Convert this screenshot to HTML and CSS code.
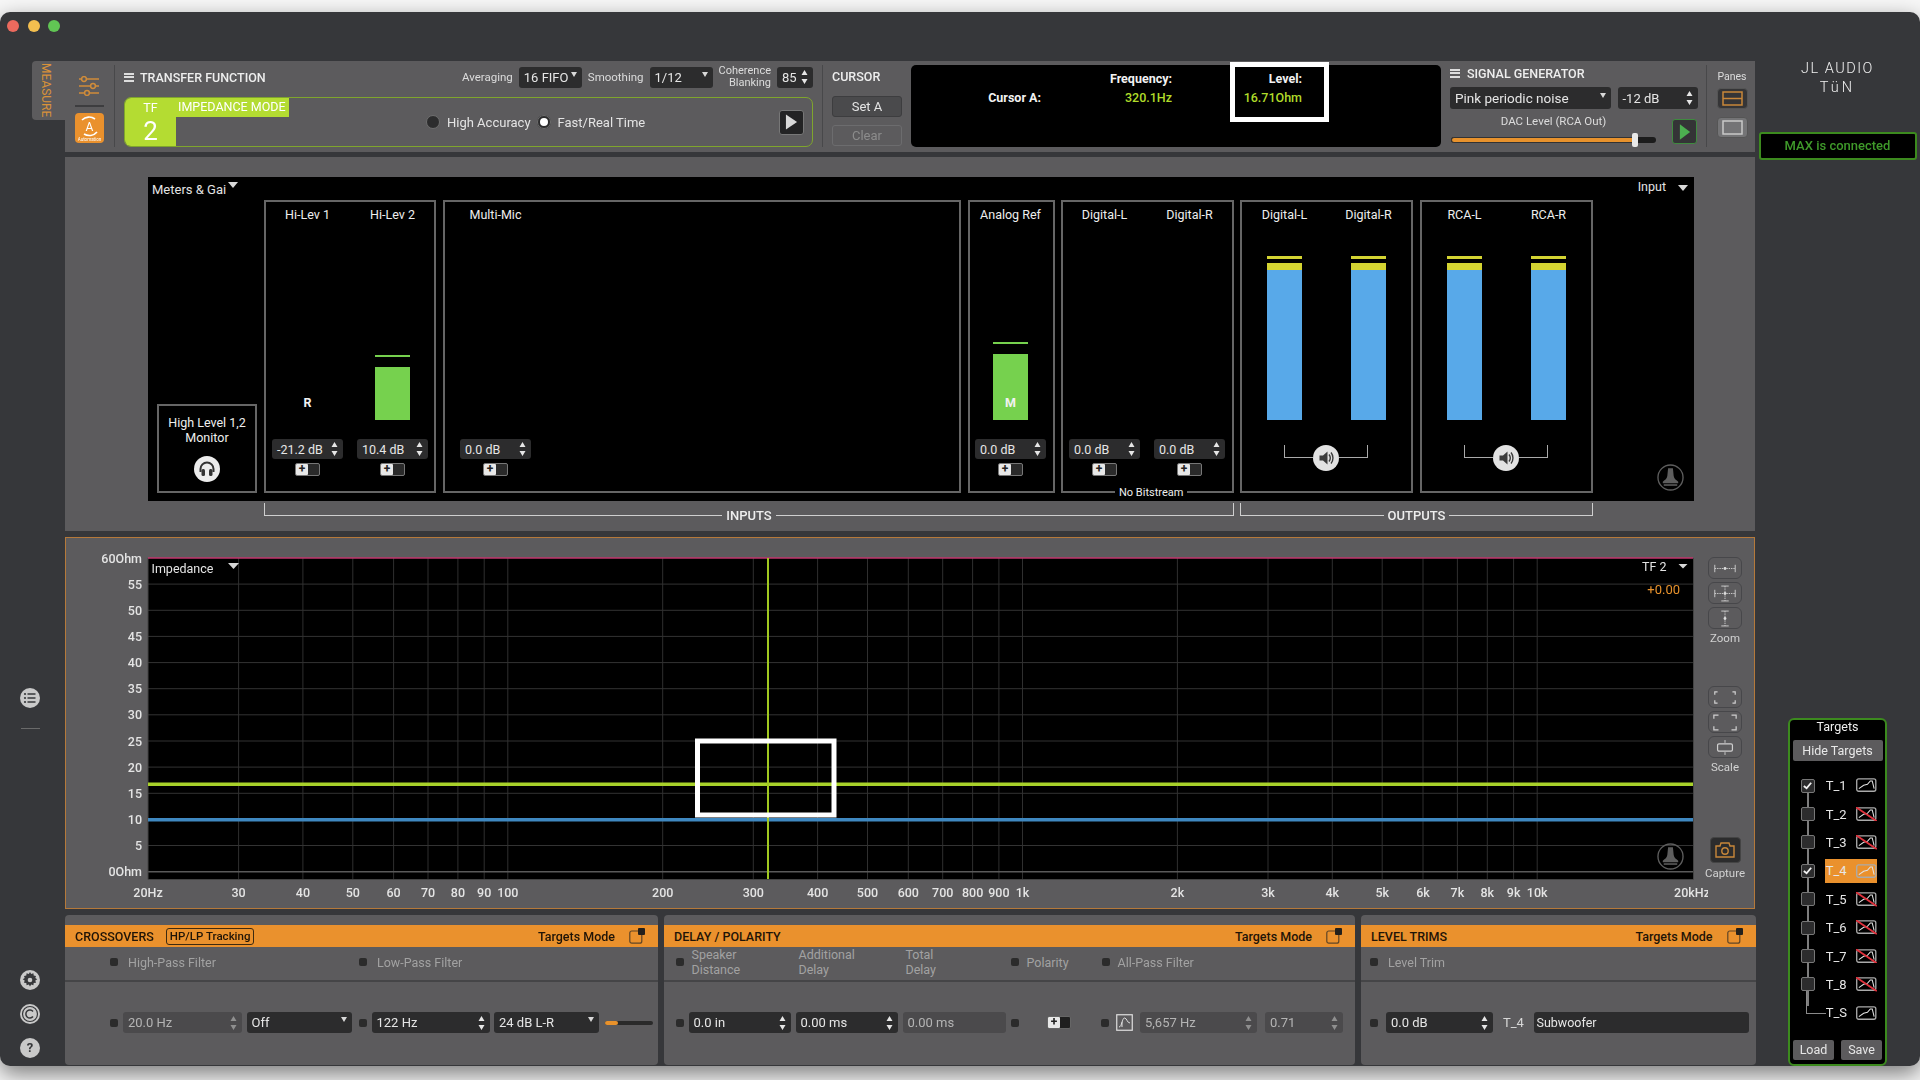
FILE: index.html
```html
<!DOCTYPE html>
<html lang="en">
<head>
<meta charset="utf-8">
<title>JL Audio TüN</title>
<link rel="stylesheet" href="styles.css">
</head>
<body>
<svg class="defs" aria-hidden="true">
  <symbol id="ud" viewBox="0 0 7 16"><path d="M3.5 1 6.5 6H.5Z M3.5 15 .5 10H6.5Z" fill="currentColor"/></symbol>
  <symbol id="tgt" viewBox="0 0 22 15"><rect x=".75" y=".75" width="20" height="13" rx="2" fill="none" stroke="#aaa" stroke-width="1.400"/><path d="M3 11 8 7.500 12 6.500 15 3 17 3 19 11" fill="none" stroke="#e2e2e2" stroke-width="1.100"/></symbol>
  <symbol id="tgtx" viewBox="0 0 22 15"><rect x=".75" y=".75" width="20" height="13" rx="2" fill="none" stroke="#aaa" stroke-width="1.400"/><path d="M3 11 8 7.500 12 6.500 15 3 17 3 19 11" fill="none" stroke="#e2e2e2" stroke-width="1.100"/><path d="M0 0 22 15" stroke="#e0313c" stroke-width="1.800"/></symbol>
  <symbol id="pop" viewBox="0 0 16 16"><rect x=".8" y="3" width="12" height="12.200" rx="2" fill="none" stroke="#5f4526" stroke-width="1.200"/><rect x="9" y="0" width="7" height="7" rx="1" fill="#23201c"/></symbol>
  <symbol id="tower" viewBox="0 0 28 28"><circle cx="14" cy="14" r="13" fill="none" stroke="#5e5e5e" stroke-width="1.400"/><path d="M11.500 4.500h5l.8 8c.4 3 3 4.500 4.700 5.800v1.700H6v-1.700c1.700-1.300 4.300-2.800 4.700-5.800Z" fill="#5e5e5e"/><path d="M7 21h14v1.600H7Z" fill="#5e5e5e"/></symbol>
  <symbol id="spk" viewBox="0 0 26 26"><circle cx="13" cy="13" r="13" fill="#e2e2e2"/><path d="M6.500 10.500h3.500l4.500-4v13l-4.500-4H6.500Z" fill="#3b3b3b"/><path d="M16 9.500c1.500 2 1.500 5 0 7M18 7.500c2.600 3.200 2.600 7.800 0 11" fill="none" stroke="#3b3b3b" stroke-width="1.400"/></symbol>
  <symbol id="led" viewBox="0 0 8 8"><rect width="8" height="8" rx="2" fill="#2b2b2b"/></symbol>
  <symbol id="check" viewBox="0 0 12 12"><path d="M2 6.500 5 9 10 3" fill="none" stroke="#f2f2f2" stroke-width="2"/></symbol>
</svg>

<div class="window">
  <aside class="rail">
    <div class="lights"><span class="light red"></span><span class="light amber"></span><span class="light green"></span></div>
    <div class="tab"><span>MEASURE</span></div>
    <svg class="rail-icon list-icon" viewBox="0 0 20 20"><circle cx="10" cy="10" r="10" fill="#c9c9c9"/><circle cx="5" cy="6" r="1.100" fill="#36373a"/><circle cx="5" cy="10" r="1.100" fill="#36373a"/><circle cx="5" cy="14" r="1.100" fill="#36373a"/><path d="M7.500 6h8M7.500 10h8M7.500 14h8" stroke="#36373a" stroke-width="1.600"/></svg>
    <div class="rail-rule"></div>
    <svg class="rail-icon gear-icon" viewBox="0 0 20 20"><circle cx="10" cy="10" r="10" fill="#c9c9c9"/><path d="M10 3.500l1.200 2 2.200-.7.300 2.300 2.300.3-.7 2.200 2 1.200-2 1.200.7 2.200-2.300.3-.3 2.300-2.200-.7-1.200 2-1.200-2-2.200.7-.3-2.300-2.300-.3.7-2.200-2-1.200 2-1.200-.7-2.200 2.300-.3.3-2.300 2.200.7Z" transform="translate(0 -1.500)" fill="#36373a"/><circle cx="10" cy="10" r="2.300" fill="#c9c9c9"/></svg>
    <svg class="rail-icon copy-icon" viewBox="0 0 20 20"><circle cx="10" cy="10" r="10" fill="#c9c9c9"/><circle cx="10" cy="10" r="7.500" fill="none" stroke="#36373a" stroke-width="1.200"/><path d="M13 7.500a4 4 0 1 0 0 5" fill="none" stroke="#36373a" stroke-width="1.500"/></svg>
    <div class="rail-icon help-icon">?</div>
  </aside>

  <main class="main">
    <section class="top">
      <div class="tc-a">
        <svg class="mixer" viewBox="0 0 22 20"><path d="M1 3h20M1 10h20M1 17h20" stroke="#d08c3a" stroke-width="1.600"/><circle cx="6" cy="3" r="2.400" fill="#5c5b5d" stroke="#d08c3a" stroke-width="1.500"/><circle cx="15" cy="10" r="2.400" fill="#5c5b5d" stroke="#d08c3a" stroke-width="1.500"/><circle cx="9" cy="17" r="2.400" fill="#5c5b5d" stroke="#d08c3a" stroke-width="1.500"/></svg>
        <div class="a-rule"></div>
        <svg class="auto" viewBox="0 0 29 30"><rect width="29" height="30" rx="4" fill="#ea912d"/><path d="M7 7a10 10 0 0 1 13-1M22 19a10 10 0 0 1-13 2" fill="none" stroke="#fff" stroke-width="1.600"/><text x="14.500" y="18" class="auto-a">A</text><text x="14.500" y="28" class="auto-t">Automation</text></svg>
      </div>
      <div class="tc-b">
        <div class="tf-head">
          <span class="burger"></span>
          <span class="sect">TRANSFER FUNCTION</span>
          <span class="lab push">Averaging</span>
          <span class="ctl w63"><span>16 FIFO</span><i class="tri"></i></span>
          <span class="lab">Smoothing</span>
          <span class="ctl w63"><span>1/12</span><i class="tri"></i></span>
          <span class="lab coh">Coherence<br>Blanking</span>
          <span class="ctl w36"><span>85</span><svg class="ud"><use href="#ud"/></svg></span>
        </div>
        <div class="tf-box">
          <div class="tf-id"><span class="tf-t">TF</span><span class="tf-n">2</span></div>
          <div class="tf-tag">IMPEDANCE MODE</div>
          <div class="radios">
            <span class="radio"></span><span class="rlab">High Accuracy</span>
            <span class="radio on"></span><span class="rlab">Fast/Real Time</span>
          </div>
          <button class="run"><svg viewBox="0 0 14 18"><path d="M1 1 13 9 1 17Z" fill="#d8d8d8"/></svg></button>
        </div>
      </div>
      <div class="tc-c">
        <div class="sect cur-t">CURSOR</div>
        <div class="btn">Set A</div>
        <div class="btn off">Clear</div>
      </div>
      <div class="readout">
        <span></span><b class="rh">Frequency:</b><b class="rh">Level:</b>
        <b class="rh">Cursor A:</b><b class="rv">320.1Hz</b><b class="rv">16.71Ohm</b>
        <div class="mark"></div>
      </div>
      <div class="siggen">
        <div class="sg-head"><span class="burger"></span><span class="sect">SIGNAL GENERATOR</span></div>
        <div class="sg-row">
          <span class="ctl w161 noise"><span>Pink periodic noise</span><i class="tri"></i></span>
          <span class="ctl w80"><span>-12 dB</span><svg class="ud"><use href="#ud"/></svg></span>
        </div>
        <div class="sg-low">
          <div class="dac">
            <div class="dac-t">DAC Level (RCA Out)</div>
            <div class="slider"><div class="slider-fill"></div><div class="slider-thumb"></div></div>
          </div>
          <button class="go"><svg viewBox="0 0 14 20"><path d="M1 1 13 10 1 19Z" fill="#4caf50"/></svg></button>
        </div>
      </div>
      <div class="panes">
        <div class="panes-t">Panes</div>
        <div class="pane-btn on"><svg viewBox="0 0 21 15"><rect x="1" y="1" width="19" height="13" fill="none" stroke="#c8873a" stroke-width="1.500"/><path d="M1 7.500h19" stroke="#c8873a" stroke-width="1.500"/></svg></div>
        <div class="pane-btn"><svg viewBox="0 0 21 15"><rect x="1" y="1" width="19" height="13" fill="none" stroke="#c9c9c9" stroke-width="1.500"/></svg></div>
      </div>
    </section>

    <section class="meters-wrap">
      <div class="meters">
        <div class="m-head">
          <span class="m-title">Meters &amp; Gai</span><i class="tri big"></i>
          <span class="m-input">Input</span><i class="tri big"></i>
        </div>
        <div class="boxes">
          <div class="box mon">
            <div class="mon-t">High Level 1,2<br>Monitor</div>
            <svg class="phones" viewBox="0 0 26 26"><circle cx="13" cy="13" r="13" fill="#ececec"/><path d="M6.500 16v-3a6.500 6.500 0 0 1 13 0v3" fill="none" stroke="#333" stroke-width="2"/><rect x="7.500" y="13" width="3.500" height="7" rx="1.500" fill="#333"/><rect x="15" y="13" width="3.500" height="7" rx="1.500" fill="#333"/></svg>
          </div>
          <div class="box w172">
            <div class="chan"><div class="c-name">Hi-Lev 1</div><div class="well"><div class="bar-clear">R</div></div><div class="ctl gain"><span>-21.2 dB</span><svg class="ud"><use href="#ud"/></svg></div><div class="tog"><span>+</span></div></div>
            <div class="chan"><div class="c-name">Hi-Lev 2</div><div class="well"><div class="peak g"></div><div class="bar g" style="height:53px"></div></div><div class="ctl gain"><span>10.4 dB</span><svg class="ud"><use href="#ud"/></svg></div><div class="tog"><span>+</span></div></div>
          </div>
          <div class="box multi">
            <div class="chan"><div class="c-name">Multi-Mic</div><div class="well"></div><div class="ctl gain"><span>0.0 dB</span><svg class="ud"><use href="#ud"/></svg></div><div class="tog"><span>+</span></div></div>
          </div>
          <div class="box analog">
            <div class="chan"><div class="c-name">Analog Ref</div><div class="well"><div class="peak g"></div><div class="bar g lbl" style="height:66px">M</div></div><div class="ctl gain"><span>0.0 dB</span><svg class="ud"><use href="#ud"/></svg></div><div class="tog"><span>+</span></div></div>
          </div>
          <div class="box w173 dig">
            <div class="chan"><div class="c-name">Digital-L</div><div class="well"></div><div class="ctl gain"><span>0.0 dB</span><svg class="ud"><use href="#ud"/></svg></div><div class="tog"><span>+</span></div></div>
            <div class="chan"><div class="c-name">Digital-R</div><div class="well"></div><div class="ctl gain"><span>0.0 dB</span><svg class="ud"><use href="#ud"/></svg></div><div class="tog"><span>+</span></div></div>
            <div class="nobits">No Bitstream</div>
          </div>
          <div class="box w173 col">
            <div class="chans">
              <div class="chan"><div class="c-name">Digital-L</div><div class="well"><div class="peak y"></div><div class="bar y"></div><div class="bar b" style="height:150px"></div></div></div>
              <div class="chan"><div class="c-name">Digital-R</div><div class="well"><div class="peak y"></div><div class="bar y"></div><div class="bar b" style="height:150px"></div></div></div>
            </div>
            <div class="spk"><span class="brk"></span><svg class="spk-i"><use href="#spk"/></svg><span class="brk r"></span></div>
          </div>
          <div class="box w173 col">
            <div class="chans">
              <div class="chan"><div class="c-name">RCA-L</div><div class="well"><div class="peak y"></div><div class="bar y"></div><div class="bar b" style="height:150px"></div></div></div>
              <div class="chan"><div class="c-name">RCA-R</div><div class="well"><div class="peak y"></div><div class="bar y"></div><div class="bar b" style="height:150px"></div></div></div>
            </div>
            <div class="spk"><span class="brk"></span><svg class="spk-i"><use href="#spk"/></svg><span class="brk r"></span></div>
          </div>
          <svg class="m-logo"><use href="#tower"/></svg>
        </div>
      </div>
      <div class="buses">
        <div class="bus in"><span class="seg l"></span><span class="bus-t">INPUTS</span><span class="seg r"></span></div>
        <div class="bus out"><span class="seg l"></span><span class="bus-t">OUTPUTS</span><span class="seg r"></span></div>
      </div>
    </section>

    <section class="graph">
      <svg class="plot" viewBox="66 538 1642 370" width="1642" height="370">
        <rect x="148" y="558" width="1545" height="321" fill="#000"/>
        <path class="grid-v" d="M238.600 558V879M302.900 558V879M352.800 558V879M393.600 558V879M428 558V879M457.900 558V879M484.200 558V879M507.800 558V879M662.700 558V879M753.300 558V879M817.600 558V879M867.500 558V879M908.300 558V879M942.700 558V879M972.600 558V879M998.900 558V879M1022.500 558V879M1177.400 558V879M1268 558V879M1332.300 558V879M1382.200 558V879M1423 558V879M1457.400 558V879M1487.300 558V879M1513.600 558V879M1537.200 558V879"/>
        <path class="grid-h" d="M148 584.100H1693M148 610.300H1693M148 636.400H1693M148 662.600H1693M148 688.700H1693M148 714.800H1693M148 741H1693M148 767.100H1693M148 793.300H1693M148 819.400H1693M148 845.500H1693"/>
        <path class="grid-zero" d="M148 871.700H1693"/>
        <path class="plot-edge" d="M148 558V879.500H1693.500V558"/>
        <path class="grid-top" d="M148 558H1693"/>
        <path class="trace-g" d="M148 784.300H1693"/>
        <path class="trace-b" d="M148 819.700H1693"/>
        <path class="cursor" d="M768 558V879"/>
        <rect class="mark-plot" x="697.500" y="741" width="136.500" height="74"/>
        <g class="ax-y">
          <text x="142" y="558">60Ohm</text><text x="142" y="584.100">55</text><text x="142" y="610.300">50</text><text x="142" y="636.400">45</text><text x="142" y="662.600">40</text><text x="142" y="688.700">35</text><text x="142" y="714.800">30</text><text x="142" y="741">25</text><text x="142" y="767.100">20</text><text x="142" y="793.300">15</text><text x="142" y="819.400">10</text><text x="142" y="845.500">5</text><text x="142" y="871.700">0Ohm</text>
        </g>
        <g class="ax-x">
          <text x="148" y="892">20Hz</text><text x="238.600" y="892">30</text><text x="302.900" y="892">40</text><text x="352.800" y="892">50</text><text x="393.600" y="892">60</text><text x="428" y="892">70</text><text x="457.900" y="892">80</text><text x="484.200" y="892">90</text><text x="507.800" y="892">100</text><text x="662.700" y="892">200</text><text x="753.300" y="892">300</text><text x="817.600" y="892">400</text><text x="867.500" y="892">500</text><text x="908.300" y="892">600</text><text x="942.700" y="892">700</text><text x="972.600" y="892">800</text><text x="998.900" y="892">900</text><text x="1022.500" y="892">1k</text><text x="1177.400" y="892">2k</text><text x="1268" y="892">3k</text><text x="1332.300" y="892">4k</text><text x="1382.200" y="892">5k</text><text x="1423" y="892">6k</text><text x="1457.400" y="892">7k</text><text x="1487.300" y="892">8k</text><text x="1513.600" y="892">9k</text><text x="1537.200" y="892">10k</text><text x="1692" y="892">20kHz</text>
        </g>
        <text class="plot-t" x="151.500" y="568">Impedance</text>
        <path class="plot-arrow" d="M228 563h11l-5.500 6Z"/>
        <text class="plot-t" x="1642" y="566">TF 2</text>
        <path class="plot-arrow" d="M1678.500 564h9l-4.500 4.500Z"/>
        <text class="plot-o" x="1680" y="589">+0.00</text>
        <use href="#tower" x="1657" y="843" width="27" height="27"/>
      </svg>
      <div class="tools">
        <div class="tool first"><svg viewBox="0 0 28 14"><path class="t-l" d="M3 3v8M25 3v8"/><path class="t-d" d="M3 7h22"/><circle cx="14" cy="7" r="1.500" fill="#ddd"/></svg></div>
        <div class="tool"><svg viewBox="0 0 28 18"><path class="t-l" d="M3 5v8M25 5v8M10 1h8M10 17h8"/><path class="t-d" d="M3 9h22M14 1v16"/><circle cx="14" cy="9" r="1.500" fill="#ddd"/></svg></div>
        <div class="tool"><svg viewBox="0 0 28 18"><path class="t-l" d="M10 1h8M10 17h8"/><path class="t-d" d="M14 1v16"/><circle cx="14" cy="9" r="1.500" fill="#ddd"/></svg></div>
        <div class="tool-t">Zoom</div>
        <div class="tool gap-a"><svg viewBox="0 0 28 18"><path class="t-l2" d="M3 6V3h3M25 6V3h-3M3 12v3h3M25 12v3h-3"/></svg></div>
        <div class="tool"><svg viewBox="0 0 28 18"><path class="t-l2" d="M2 5V1h5M26 5V1h-5M2 13v4h5M26 13v4h-5"/></svg></div>
        <div class="tool"><svg viewBox="0 0 28 18"><rect class="t-l2" x="6" y="5" width="16" height="8" rx="1.500"/><path class="t-l" d="M14 1v3M14 14v3"/></svg></div>
        <div class="tool-t">Scale</div>
        <div class="capture"><svg viewBox="0 0 20 16"><path d="M1 4h4l1-3h8l1 3h4v11H1Z" fill="none" stroke="#c8873a" stroke-width="1.400"/><circle cx="10" cy="9" r="3.200" fill="none" stroke="#c8873a" stroke-width="1.400"/></svg></div>
        <div class="tool-t cap-t">Capture</div>
      </div>
    </section>

    <section class="bottom">
      <div class="card xo">
        <div class="card-bar">
          <span class="card-t">CROSSOVERS</span><span class="track">HP/LP Tracking</span>
          <span class="tm">Targets Mode</span><svg class="pop"><use href="#pop"/></svg>
        </div>
        <div class="card-row r1">
          <svg class="led"><use href="#led"/></svg><span class="dim w241">High-Pass Filter</span>
          <svg class="led"><use href="#led"/></svg><span class="dim">Low-Pass Filter</span>
        </div>
        <div class="card-row r2">
          <svg class="led"><use href="#led"/></svg>
          <span class="ctl low w118 ml5"><span>20.0 Hz</span><svg class="ud"><use href="#ud"/></svg></span>
          <span class="ctl w105 ml5"><span>Off</span><i class="tri"></i></span>
          <svg class="led ml7"><use href="#led"/></svg>
          <span class="ctl w118 ml5"><span>122 Hz</span><svg class="ud"><use href="#ud"/></svg></span>
          <span class="ctl w105 ml4"><span>24 dB L-R</span><i class="tri"></i></span>
          <span class="mini"><span class="mini-fill"></span></span>
        </div>
      </div>
      <div class="card dl">
        <div class="card-bar">
          <span class="card-t">DELAY / POLARITY</span>
          <span class="tm">Targets Mode</span><svg class="pop"><use href="#pop"/></svg>
        </div>
        <div class="card-row r1">
          <svg class="led"><use href="#led"/></svg>
          <span class="dim two w107 ml8">Speaker<br>Distance</span>
          <span class="dim two w107">Additional<br>Delay</span>
          <span class="dim two w105">Total<br>Delay</span>
          <svg class="led"><use href="#led"/></svg><span class="dim w67 ml8">Polarity</span>
          <svg class="led"><use href="#led"/></svg><span class="dim ml8">All-Pass Filter</span>
        </div>
        <div class="card-row r2">
          <svg class="led"><use href="#led"/></svg>
          <span class="ctl w102 ml5"><span>0.0 in</span><svg class="ud"><use href="#ud"/></svg></span>
          <span class="ctl w102 ml5"><span>0.00 ms</span><svg class="ud"><use href="#ud"/></svg></span>
          <span class="ctl low w103 ml5"><span>0.00 ms</span></span>
          <svg class="led ml5"><use href="#led"/></svg>
          <span class="tog pol"><span>+</span></span>
          <svg class="led ml30"><use href="#led"/></svg>
          <svg class="ap" viewBox="0 0 17 17"><rect x=".75" y=".75" width="15.500" height="15.500" fill="none" stroke="#e0e0e0" stroke-width="1.200"/><path d="M3 13c3 0 3-9 5.500-9S11 9 14 9M6 13V8" fill="none" stroke="#e0e0e0"/></svg>
          <span class="ctl low w117 ml7"><span>5,657 Hz</span><svg class="ud"><use href="#ud"/></svg></span>
          <span class="ctl low w78 ml8"><span>0.71</span><svg class="ud"><use href="#ud"/></svg></span>
        </div>
      </div>
      <div class="card lv">
        <div class="card-bar">
          <span class="card-t">LEVEL TRIMS</span>
          <span class="tm">Targets Mode</span><svg class="pop"><use href="#pop"/></svg>
        </div>
        <div class="card-row r1"><svg class="led"><use href="#led"/></svg><span class="dim ml10">Level Trim</span></div>
        <div class="card-row r2">
          <svg class="led"><use href="#led"/></svg>
          <span class="ctl w107 ml8"><span>0.0 dB</span><svg class="ud"><use href="#ud"/></svg></span>
          <span class="t4">T_4</span>
          <span class="ctl w215 sub"><span>Subwoofer</span></span>
        </div>
      </div>
    </section>
  </main>

  <aside class="side">
    <div class="brand">JL AUDIO</div>
    <div class="brand-2">TüN</div>
    <div class="max">MAX is connected</div>
    <div class="targets">
      <div class="tg-t">Targets</div>
      <div class="tg-hide">Hide Targets</div>
      <div class="tg-list">
        <div class="tg-row"><span class="tg-box"><svg><use href="#check"/></svg></span><span class="tg-cell"><span class="tg-n">T_1</span><svg class="tg-i"><use href="#tgt"/></svg></span></div>
        <div class="tg-row"><span class="tg-box"></span><span class="tg-cell"><span class="tg-n">T_2</span><svg class="tg-i"><use href="#tgtx"/></svg></span></div>
        <div class="tg-row"><span class="tg-box"></span><span class="tg-cell"><span class="tg-n">T_3</span><svg class="tg-i"><use href="#tgtx"/></svg></span></div>
        <div class="tg-row"><span class="tg-box"><svg><use href="#check"/></svg></span><span class="tg-cell on"><span class="tg-n">T_4</span><svg class="tg-i"><use href="#tgt"/></svg></span></div>
        <div class="tg-row"><span class="tg-box"></span><span class="tg-cell"><span class="tg-n">T_5</span><svg class="tg-i"><use href="#tgtx"/></svg></span></div>
        <div class="tg-row"><span class="tg-box"></span><span class="tg-cell"><span class="tg-n">T_6</span><svg class="tg-i"><use href="#tgtx"/></svg></span></div>
        <div class="tg-row"><span class="tg-box"></span><span class="tg-cell"><span class="tg-n">T_7</span><svg class="tg-i"><use href="#tgtx"/></svg></span></div>
        <div class="tg-row"><span class="tg-box"></span><span class="tg-cell"><span class="tg-n">T_8</span><svg class="tg-i"><use href="#tgtx"/></svg></span></div>
        <div class="tg-row"><span class="tg-elbow"></span><span class="tg-cell"><span class="tg-n">T_S</span><svg class="tg-i"><use href="#tgt"/></svg></span></div>
      </div>
      <div class="tg-foot"><span class="tg-btn">Load</span><span class="tg-btn">Save</span></div>
    </div>
  </aside>
</div>
</body>
</html>
```

FILE: styles.css
```css
* { box-sizing: border-box; }
html, body { margin: 0; height: 100%; }
body {
  width: 1920px; height: 1080px; overflow: hidden;
  background: #f7f7f7;
  font-family: Roboto, "Liberation Sans", sans-serif;
  font-size: 13px; color: #e4e4e4;
}
.defs { display: none; }
button { padding: 0; font: inherit; }

.window {
  margin-top: 12px; width: 1920px; height: 1054px;
  display: flex; background: #36373a; border-radius: 10px;
  box-shadow: 0 8px 22px rgba(0,0,0,.5);
  filter: blur(.35px);
}

/* left rail */
.rail { width: 65px; display: flex; flex-direction: column; padding-top: 8px; padding-bottom: 8px; flex: none; }
.lights { display: flex; gap: 8.500px; padding-left: 7px; }
.light { width: 12px; height: 12px; border-radius: 50%; }
.red { background: #ec6a5e; } .amber { background: #f4bf4f; } .green { background: #61c554; }
.tab {
  margin: 29px 0 0 32px; width: 33px; height: 59px; background: #5c5b5d;
  border-radius: 4px 0 0 4px; display: flex; justify-content: center; padding-right: 5px;
}
.tab span { writing-mode: vertical-rl; color: #d9923a; font-size: 12px; line-height: 14px; white-space: nowrap; padding-top: 2px; }
.rail-icon { display: block; width: 20px; height: 20px; margin-left: 20px; flex: none; }
.list-icon { margin-top: 568px; }
.rail-rule { margin: 20px 0 0 21px; width: 19px; height: 1px; background: #6a6a6a; }
.gear-icon { margin-top: auto; }
.copy-icon { margin-top: 14px; }
.help-icon { margin-top: 14px; border-radius: 50%; background: #c9c9c9; color: #36373a; font-weight: 700; font-size: 13px; line-height: 20px; text-align: center; }

/* main column */
.main { width: 1690px; flex: none; padding-top: 49px; display: flex; flex-direction: column; }

/* top strip */
.top { height: 91px; background: #5c5b5d; display: flex; padding: 4px 0 5px; flex: none; }
.tc-a { width: 50px; border-right: 1px solid #48484a; display: flex; flex-direction: column; align-items: center; padding-top: 11px; padding-right: 1px; flex: none; }
.mixer { width: 22px; height: 20px; }
.a-rule { width: 29px; height: 2px; background: #3d3d3f; margin-top: 9px; }
.auto { width: 29px; height: 30px; margin-top: 6px; }
.auto-a { font: 400 12px Roboto, sans-serif; fill: #fff; text-anchor: middle; }
.auto-t { font: 400 4.500px Roboto, sans-serif; fill: #fff; text-anchor: middle; }

.tc-b { width: 708px; padding: 0 9px; border-right: 1px solid #48484a; display: flex; flex-direction: column; flex: none; }
.tf-head { height: 24px; display: flex; align-items: center; }
.burger { width: 10px; height: 9px; border-top: 2px solid #ddd; border-bottom: 2px solid #ddd; position: relative; flex: none; }
.burger::after { content: ""; position: absolute; left: 0; right: 0; top: 1.500px; height: 2px; background: #ddd; }
.sect { font-weight: 500; font-size: 12.500px; color: #eee; white-space: nowrap; }
.tf-head .sect { margin-left: 6px; }
.lab { font-size: 11.500px; color: #dcdcdc; margin-right: 6px; white-space: nowrap; }
.lab.push { margin-left: auto; }
.coh { text-align: right; line-height: 12px; margin-left: 6px; font-size: 11px; }
.ctl + .lab { margin-left: 6px; }

.ctl {
  display: flex; align-items: center; justify-content: space-between; flex: none;
  height: 21px; background: #2c2c2d; border-radius: 3px; padding: 0 5px; color: #e6e6e6;
  font-size: 13px; white-space: nowrap; overflow: hidden;
}
.ctl.low { background: #4b4a4c; color: #b4b4b4; }
.noise { font-size: 13.500px; }
.sub { padding-left: 3px; font-size: 12.500px; }
.ud { width: 7px; height: 16px; flex: none; display: block; }
.low .ud { color: #8f8f8f; }
.tri { width: 0; height: 0; border-left: 3.500px solid transparent; border-right: 3.500px solid transparent; border-top: 5px solid #d8d8d8; flex: none; margin-top: -6px; }
.tri.big { border-left-width: 5px; border-right-width: 5px; border-top-width: 6px; }
.w36 { width: 36px; } .w63 { width: 63px; } .w80 { width: 80px; } .w161 { width: 161px; }
.w102 { width: 102px; } .w103 { width: 103px; } .w105 { width: 105px; } .w107 { width: 107px; }
.w117 { width: 117px; } .w118 { width: 118.500px; } .w78 { width: 78px; } .w215 { width: 215px; } .w67 { width: 75px; } .w241 { width: 231px; }
.ml4 { margin-left: 4px; } .ml5 { margin-left: 5px; } .ml7 { margin-left: 7px; } .ml8 { margin-left: 8px; } .ml10 { margin-left: 10px; } .ml30 { margin-left: 30px; }

.tf-box { margin-top: 8px; height: 50px; border: 1px solid #7fa52d; border-radius: 7px; display: flex; overflow: hidden; }
.tf-id { width: 51px; background: #b4dc32; color: #fff; display: flex; flex-direction: column; align-items: center; }
.tf-t { font-size: 12.500px; line-height: 20px; }
.tf-n { font-size: 26px; line-height: 26px; }
.tf-tag { width: 113px; height: 19px; background: #b4dc32; color: #fff; font-size: 12.500px; line-height: 18px; padding-left: 2px; white-space: nowrap; }
.radios { margin-left: 137px; display: flex; align-items: center; }
.radio { width: 14px; height: 14px; border-radius: 50%; background: #2c2c2d; border: 1px solid #6e6e6e; }
.radio.on { background: #fff; border: 3px solid #2c2c2d; outline: 1px solid #6e6e6e; outline-offset: -1px; margin-left: 6px; }
.rlab { margin-left: 7px; font-size: 13px; color: #e4e4e4; white-space: nowrap; }
.run { margin: auto 8px auto auto; width: 25px; height: 25px; background: #232324; border: 1px solid #777; border-radius: 3px; display: flex; align-items: center; justify-content: center; }
.run svg { width: 13px; height: 18px; }

.tc-c { width: 88px; padding-left: 9px; display: flex; flex-direction: column; flex: none; }
.cur-t { height: 24px; line-height: 24px; }
.btn { width: 70px; height: 21px; margin-top: 7px; background: #4a4a4c; border: 1px solid #3d3d3f; border-radius: 3px; text-align: center; line-height: 19px; color: #e4e4e4; }
.btn.off { margin-top: 8px; background: #5c5b5d; border-color: #6c6c6e; color: #8c8c8c; }

.readout {
  position: relative; width: 530px; height: 82px; background: #000; border-radius: 5px; flex: none;
  display: grid; grid-template-columns: 55px 131px 130px; grid-template-rows: 19px 19px; padding: 4px 0 0 75px; align-content: start;
}
.readout b { text-align: right; font-size: 12.500px; font-weight: 700; line-height: 19px; white-space: nowrap; color: #f2f2f2; }
.readout .rv { color: #b0dc2a; font-weight: 500; }
.mark { position: absolute; left: 319px; top: -3px; width: 99px; height: 60px; border: 5px solid #fff; }

.siggen { width: 256px; margin-left: 9px; flex: none; }
.sg-head { height: 16px; display: flex; align-items: center; }
.sg-head .sect { margin-left: 7px; }
.sg-row { display: flex; gap: 6.500px; margin-top: 6px; height: 22px; }
.sg-row .ctl { height: 22px; }
.sg-low { display: flex; margin-top: 5px; }
.dac { width: 206px; }
.dac-t { text-align: center; font-size: 11.500px; line-height: 14px; color: #dcdcdc; padding-left: 1px; }
.slider { position: relative; margin-top: 9px; height: 6px; background: #1c1c1c; border-radius: 3px; margin-left: 1px; }
.slider-fill { width: 185px; height: 6px; border: 1px solid #333; border-radius: 3px; background: #e8922c; }
.slider-thumb { position: absolute; left: 181px; top: -4px; width: 6px; height: 14px; background: #e9e9e9; border-radius: 2px; }
.go { margin: 5px 0 0 16px; width: 25px; height: 25px; background: #343436; border: 1px solid #3f8a3f; border-radius: 3px; display: flex; align-items: center; justify-content: center; }
.go svg { width: 12px; height: 18px; }

.panes { width: 50px; border-left: 1px solid #48484a; display: flex; flex-direction: column; align-items: center; flex: none; padding: 5px 0 0 1px; }
.panes-t { font-size: 10.500px; line-height: 14px; color: #dcdcdc; }
.pane-btn { width: 31px; height: 21px; margin-top: 4px; background: #747476; border: 1px solid #555; border-radius: 4px; display: flex; align-items: center; justify-content: center; }
.pane-btn + .pane-btn { margin-top: 8px; }
.pane-btn.on { background: #353537; }
.pane-btn svg { width: 21px; height: 15px; }

/* meters */
.meters-wrap { margin-top: 5px; height: 374px; background: #5c5b5d; padding: 20px 61px 0 83px; flex: none; }
.meters { height: 324px; background: #000; padding: 0 0 8px 9px; }
.m-head { height: 23px; display: flex; align-items: center; padding-right: 6px; }
.m-title { margin: 1px 0 0 -5px; font-size: 13px; white-space: nowrap; }
.m-head .tri:nth-child(2) { margin: -7px 0 0 2px; }
.m-input { margin: -5px 12px 0 auto; font-size: 12.500px; }
.m-head .tri:last-child { margin-top: -2px; }
.boxes { display: flex; height: 293px; }
.box { position: relative; height: 293px; border: 2px solid #666; display: flex; gap: 14px; padding: 0 6px; margin-right: 7px; flex: none; background: #000; }
.box.col { flex-direction: column; gap: 0; }
.chans { display: flex; gap: 13px; padding-left: 1px; }
.mon { width: 100px; height: 89px; align-self: flex-end; flex-direction: column; align-items: center; gap: 0; padding: 9px 0 0; text-align: center; }
.mon-t { font-size: 12.500px; line-height: 15px; color: #eee; }
.phones { width: 26px; height: 26px; margin-top: 11px; }
.w172 { width: 172px; }
.w173 { width: 173px; }
.multi { width: 517.500px; padding-left: 15px; }
.analog { width: 87.500px; padding-left: 5.500px; margin-right: 6px; }
.dig { margin-right: 6px; }
.chan { width: 71px; display: flex; flex-direction: column; align-items: center; flex: none; }
.c-name { height: 24px; line-height: 25px; font-size: 12.500px; color: #eee; white-space: nowrap; }
.well { height: 194px; width: 35px; display: flex; flex-direction: column; justify-content: flex-end; flex: none; }
.bar-clear { height: 34px; line-height: 34px; text-align: center; font-weight: 700; font-size: 12.500px; color: #f2f2f2; }
.peak { height: 2px; margin-bottom: 10px; flex: none; }
.peak.y { height: 3px; margin-bottom: 4px; background: #d4d432; }
.peak.g, .bar.g { background: #76d14e; }
.bar { flex: none; }
.bar.y { height: 7.500px; background: #d4d432; }
.bar.b { background: #58a9e9; }
.lbl { display: flex; align-items: flex-end; justify-content: center; line-height: 34px; font-weight: 700; font-size: 12.500px; color: #f2f2f2; }
.gain { width: 71px; height: 20px; margin-top: 19px; font-size: 12.500px; }
.tog { display: flex; width: 25px; height: 13px; margin-top: 4px; border: 1px solid #777; border-radius: 2px; background: #2a2a2a; flex: none; }
.tog span { width: 12px; background: #e8e8e8; color: #222; font-weight: 700; font-size: 12px; line-height: 10px; text-align: center; border-radius: 1px; }
.nobits { position: absolute; left: 52px; bottom: -8px; padding: 0 4px; background: #000; font-size: 11px; line-height: 13px; color: #eee; white-space: nowrap; }
.spk { display: flex; justify-content: center; align-items: flex-start; margin-top: 25px; padding-right: 2px; }
.brk { width: 29px; height: 13px; border-left: 1px solid #aaa; border-bottom: 1px solid #aaa; }
.brk.r { border-left: 0; border-right: 1px solid #aaa; }
.spk-i { width: 26px; height: 26px; }
.m-logo { width: 27px; height: 27px; margin: auto 0 2px 57px; }

.buses { display: flex; gap: 6px; margin: 2px 0 0 116px; }
.bus { display: flex; align-items: flex-start; }
.bus.in { width: 970px; } .bus.out { width: 353px; }
.seg { flex: 1; height: 13px; border-bottom: 1px solid #cfcfcf; }
.seg.l { border-left: 1px solid #cfcfcf; }
.seg.r { border-right: 1px solid #cfcfcf; }
.bus-t { margin-top: 6px; padding: 0 4px; line-height: 14px; font-size: 13px; font-weight: 500; color: #eee; }

/* graph */
.graph { margin-top: 6px; height: 372px; border: 1px solid #b5793a; background: #5c5b5d; display: flex; flex: none; }
.plot { display: block; flex: none; }
.grid-v { stroke: #2f2f2f; stroke-width: 1; fill: none; }
.grid-h { stroke: #333; stroke-width: 1; fill: none; }
.grid-zero { stroke: #5a5a5a; stroke-width: 1.500; fill: none; }
.plot-edge { stroke: #444; stroke-width: 1; fill: none; }
.grid-top { stroke: #c0366c; stroke-width: 1.500; fill: none; }
.trace-g { stroke: #a8d22a; stroke-width: 3.500; fill: none; }
.trace-b { stroke: #3f88c0; stroke-width: 3.500; fill: none; }
.cursor { stroke: #a0c820; stroke-width: 2; fill: none; }
.mark-plot { fill: none; stroke: #fff; stroke-width: 5; }
.ax-y text { font: 500 12.500px Roboto, sans-serif; fill: #e4e4e4; text-anchor: end; dominant-baseline: central; }
.ax-x text { font: 500 12.500px Roboto, sans-serif; fill: #e4e4e4; text-anchor: middle; dominant-baseline: central; }
.plot-t { font: 400 12.500px Roboto, sans-serif; fill: #e4e4e4; dominant-baseline: central; }
.plot-o { font: 400 13px Roboto, sans-serif; fill: #e8922c; text-anchor: end; dominant-baseline: central; }
.plot-arrow { fill: #d8d8d8; }

.tools { width: 44px; margin-left: -5px; display: flex; flex-direction: column; align-items: center; flex: none; padding-top: 19px; }
.tool { width: 34px; height: 22px; margin-bottom: 3px; border: 1.500px solid #47474a; border-radius: 6px; display: flex; align-items: center; justify-content: center; flex: none; }
.tool svg { width: 26px; height: 17px; }
.t-l { stroke: #cfcfcf; stroke-width: 1; fill: none; }
.t-d { stroke: #cfcfcf; stroke-width: 1; stroke-dasharray: 1.500 1; fill: none; }
.t-l2 { stroke: #cfcfcf; stroke-width: 1.300; fill: none; }
.tool-t { line-height: 14px; font-size: 11.500px; color: #d2d2d2; margin-top: -1px; white-space: nowrap; }
.gap-a { margin-top: 41px; }
.capture { margin-top: 63px; width: 31px; height: 26px; background: #2c2c2d; border: 1px solid #444; border-radius: 4px; display: flex; align-items: center; justify-content: center; flex: none; }
.capture svg { width: 20px; height: 16px; }
.cap-t { margin-top: 3px; }

/* bottom cards */
.bottom { margin-top: 6px; height: 150px; display: flex; gap: 6px; flex: none; }
.card { background: #5c5b5d; border-radius: 4px; padding-top: 10px; display: flex; flex-direction: column; flex: none; }
.xo { width: 593px; } .dl { width: 691px; } .lv { width: 394.500px; }
.card-bar { height: 22px; background: #ea912d; display: flex; align-items: center; padding: 0 13px 0 10px; color: #1f1407; flex: none; }
.card-t { font-weight: 500; font-size: 12.500px; white-space: nowrap; }
.track { margin-left: 12px; border: 1px solid #3d2a10; border-radius: 3px; height: 17px; line-height: 14px; padding: 0 3px; font-weight: 500; font-size: 11.500px; white-space: nowrap; }
.tm { margin-left: auto; font-weight: 500; font-size: 12.500px; white-space: nowrap; }
.pop { width: 16px; height: 16px; margin-left: 14px; }
.card-row { display: flex; align-items: center; flex: none; }
.led { width: 8px; height: 8px; flex: none; }
.r1 { height: 35px; padding-bottom: 3px; border-bottom: 2px solid #454547; }
.r2 { flex: 1; padding-bottom: 2px; }
.xo .card-row { padding-left: 45px; }
.dl .card-row { padding-left: 11.500px; }
.lv .card-row { padding-left: 9px; }
.dim { color: #a2a2a2; font-size: 12.500px; white-space: nowrap; }
.xo .r1 .dim { margin-left: 10px; }
.two { line-height: 15px; }
.mini { margin-left: 6px; width: 48px; height: 4px; background: #2a2a2a; border-radius: 2px; }
.mini-fill { display: block; width: 13px; height: 4px; background: #e8922c; border-radius: 2px; }
.tog.pol { margin: 0 0 0 28.500px; border-color: #666; width: 24px; background: #1f1f1f; }
.ap { width: 17px; height: 17px; margin-left: 7px; flex: none; }
.t4 { width: 30.500px; margin-left: 10px; color: #d8d8d8; font-size: 13px; }

/* right side */
.side { flex: 1; display: flex; flex-direction: column; align-items: center; }
.brand { margin-top: 47px; font-weight: 300; font-size: 14.500px; line-height: 20px; letter-spacing: 1.500px; color: #f0f0f0; white-space: nowrap; }
.brand-2 { font-weight: 300; font-size: 14.500px; line-height: 18px; letter-spacing: 3px; color: #f0f0f0; }
.max { margin-top: 35px; width: 158px; height: 28px; background: #000; border: 2px solid #3c8a1e; border-radius: 3px; text-align: center; line-height: 24px; color: #3f9a2a; font-weight: 500; font-size: 13px; }
.targets { margin-top: auto; width: 99px; height: 348px; background: #000; border: 2px solid #3c8a1e; border-radius: 6px; display: flex; flex-direction: column; align-items: center; }
.tg-t { line-height: 14px; font-size: 12.500px; color: #eee; }
.tg-hide { margin-top: 6px; width: 90px; height: 21px; background: #5c5b5d; border-radius: 2px; text-align: center; line-height: 21px; font-size: 12.500px; color: #e8e8e8; }
.tg-list { margin-top: 10.500px; width: 100%; flex: none; }
.tg-row { height: 28.400px; display: flex; align-items: center; padding-left: 10.700px; }
.tg-box { position: relative; width: 14px; height: 14px; background: #2c2c2d; border: 1px solid #777; border-radius: 2px; flex: none; display: flex; align-items: center; justify-content: center; }
.tg-box svg { width: 11px; height: 11px; }
.tg-box::after { content: ""; position: absolute; left: 5px; top: 13px; width: 2px; height: 15px; background: #7d7d7d; }
.tg-elbow { position: relative; width: 14px; height: 14px; flex: none; }
.tg-elbow::before { content: ""; position: absolute; left: 5px; top: -15px; width: 19px; height: 22px; border-left: 1.500px solid #8a8a8a; border-bottom: 1.500px solid #8a8a8a; }
.tg-cell { margin-left: 10px; width: 52px; height: 24px; display: flex; align-items: center; padding-left: 1px; flex: none; }
.tg-cell.on { background: #ea912d; }
.tg-n { width: 30px; font-size: 13px; color: #e6e6e6; }
.tg-i { width: 21px; height: 14.500px; }
.tg-foot { margin-top: auto; margin-bottom: 4px; display: flex; gap: 7px; }
.tg-btn { width: 41px; height: 20px; background: #5c5b5d; border-radius: 2px; text-align: center; line-height: 20px; font-size: 12.500px; color: #e6e6e6; }
```
